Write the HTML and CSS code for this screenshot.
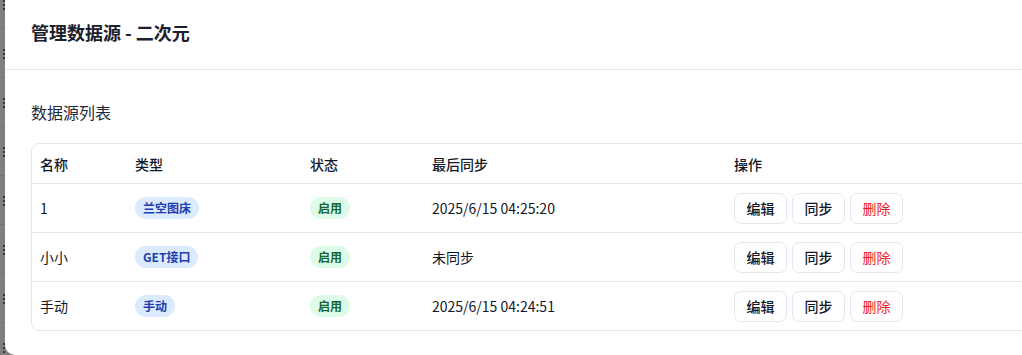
FILE: index.html
```html
<!DOCTYPE html>
<html lang="zh-CN">
<head>
    <meta charset="UTF-8">
    <meta name="viewport" content="width=device-width, initial-scale=1.0">
    <title>管理数据源</title>
    <link rel="stylesheet" href="styles.css">
</head>
<body>
    <!-- page behind the dialog, mostly covered -->
    <div class="underlay">
        <div class="underlay-row"><span class="grip"><i></i><i></i><i></i></span></div>
        <div class="underlay-row"><span class="grip"><i></i><i></i><i></i></span></div>
        <div class="underlay-row"><span class="grip"><i></i><i></i><i></i></span></div>
        <div class="underlay-row"><span class="grip"><i></i><i></i><i></i></span></div>
        <div class="underlay-row"><span class="grip"><i></i><i></i><i></i></span></div>
        <div class="underlay-row"><span class="grip"><i></i><i></i><i></i></span></div>
        <div class="underlay-row"><span class="grip"><i></i><i></i><i></i></span></div>
        <div class="underlay-row"><span class="grip"><i></i><i></i><i></i></span></div>
    </div>

    <div class="modal">
        <div class="modal-header">管理数据源 - 二次元</div>
        <div class="modal-body">
            <div class="section-title">数据源列表</div>
            <div class="table-wrap">
                <table class="source-table">
                    <thead>
                        <tr>
                            <th class="col-name">名称</th>
                            <th class="col-type">类型</th>
                            <th class="col-status">状态</th>
                            <th class="col-sync">最后同步</th>
                            <th class="col-actions">操作</th>
                        </tr>
                    </thead>
                    <tbody>
                        <tr>
                            <td>1</td>
                            <td><span class="badge badge-blue">兰空图床</span></td>
                            <td><span class="badge badge-green">启用</span></td>
                            <td>2025/6/15 04:25:20</td>
                            <td>
                                <div class="actions">
                                    <button class="btn">编辑</button>
                                    <button class="btn">同步</button>
                                    <button class="btn btn-danger">删除</button>
                                </div>
                            </td>
                        </tr>
                        <tr>
                            <td>小小</td>
                            <td><span class="badge badge-blue">GET接口</span></td>
                            <td><span class="badge badge-green">启用</span></td>
                            <td>未同步</td>
                            <td>
                                <div class="actions">
                                    <button class="btn">编辑</button>
                                    <button class="btn">同步</button>
                                    <button class="btn btn-danger">删除</button>
                                </div>
                            </td>
                        </tr>
                        <tr>
                            <td>手动</td>
                            <td><span class="badge badge-blue">手动</span></td>
                            <td><span class="badge badge-green">启用</span></td>
                            <td>2025/6/15 04:24:51</td>
                            <td>
                                <div class="actions">
                                    <button class="btn">编辑</button>
                                    <button class="btn">同步</button>
                                    <button class="btn btn-danger">删除</button>
                                </div>
                            </td>
                        </tr>
                    </tbody>
                </table>
            </div>
        </div>
    </div>
</body>
</html>
```

FILE: styles.css
```css
body {
    font-family: "Noto Sans CJK SC", "Noto Sans", sans-serif;
    margin: 0;
    padding: 0;
    display: flex;
    height: 100vh;
    overflow: hidden;
    background-color: #7f7f7f;
    color: #111827;
}

.underlay {
    width: 5px;
    flex-shrink: 0;
    margin-top: -20px;
}

.underlay-row {
    height: 48px;
    border-bottom: 1px solid #737373;
}

.grip {
    display: flex;
    flex-direction: column;
    gap: 2px;
    padding-top: 20px;
    margin-left: 3px;
}

.grip i {
    display: block;
    width: 2px;
    height: 2px;
    background-color: #2f3542;
}

.modal {
    flex: 1;
    height: 355px;
    background-color: #fff;
    border-bottom-left-radius: 10px;
    overflow: hidden;
}

.modal-header {
    padding: 20px 26px 25px;
    font-size: 18px;
    line-height: 24px;
    font-weight: 700;
    color: #1a202c;
    border-bottom: 1px solid #e5e7eb;
}

.modal-body {
    padding: 30px 0 0 26px;
}

.section-title {
    font-size: 16px;
    line-height: 24px;
    font-weight: 400;
    color: #1f2937;
    margin-bottom: 19px;
}

.table-wrap {
    width: 1100px;
    border: 1px solid #e5e7eb;
    border-radius: 8px;
    overflow: hidden;
}

.source-table {
    width: 100%;
    border-collapse: collapse;
    font-size: 14px;
    table-layout: fixed;
}

.source-table th {
    height: 39px;
    padding: 0 8px;
    text-align: left;
    font-weight: 500;
    color: #111827;
    border-bottom: 1px solid #e2e8f0;
}

.source-table td {
    height: 48px;
    padding: 0 8px;
    border-bottom: 1px solid #e2e8f0;
    vertical-align: middle;
    color: #111827;
}

.source-table tbody tr:last-child td {
    border-bottom: none;
}

.col-name { width: 79px; }
.col-type { width: 159px; }
.col-status { width: 106px; }
.col-sync { width: 286px; }

.badge {
    display: inline-block;
    padding: 3px 8px;
    border-radius: 11px;
    font-size: 12px;
    line-height: 16px;
    font-weight: 700;
}

.badge-blue {
    background-color: #dbeafe;
    color: #1e40af;
}

.badge-green {
    background-color: #dcfce7;
    color: #166534;
}

.actions {
    display: flex;
    gap: 5px;
}

.btn {
    width: 53px;
    height: 31px;
    padding: 0;
    font-family: inherit;
    font-size: 14px;
    font-weight: 500;
    color: #111827;
    background-color: #fff;
    border: 1px solid #e2e8f0;
    border-radius: 7px;
    cursor: pointer;
}

.btn-danger {
    color: #ef1c1c;
    font-weight: 400;
}
```
